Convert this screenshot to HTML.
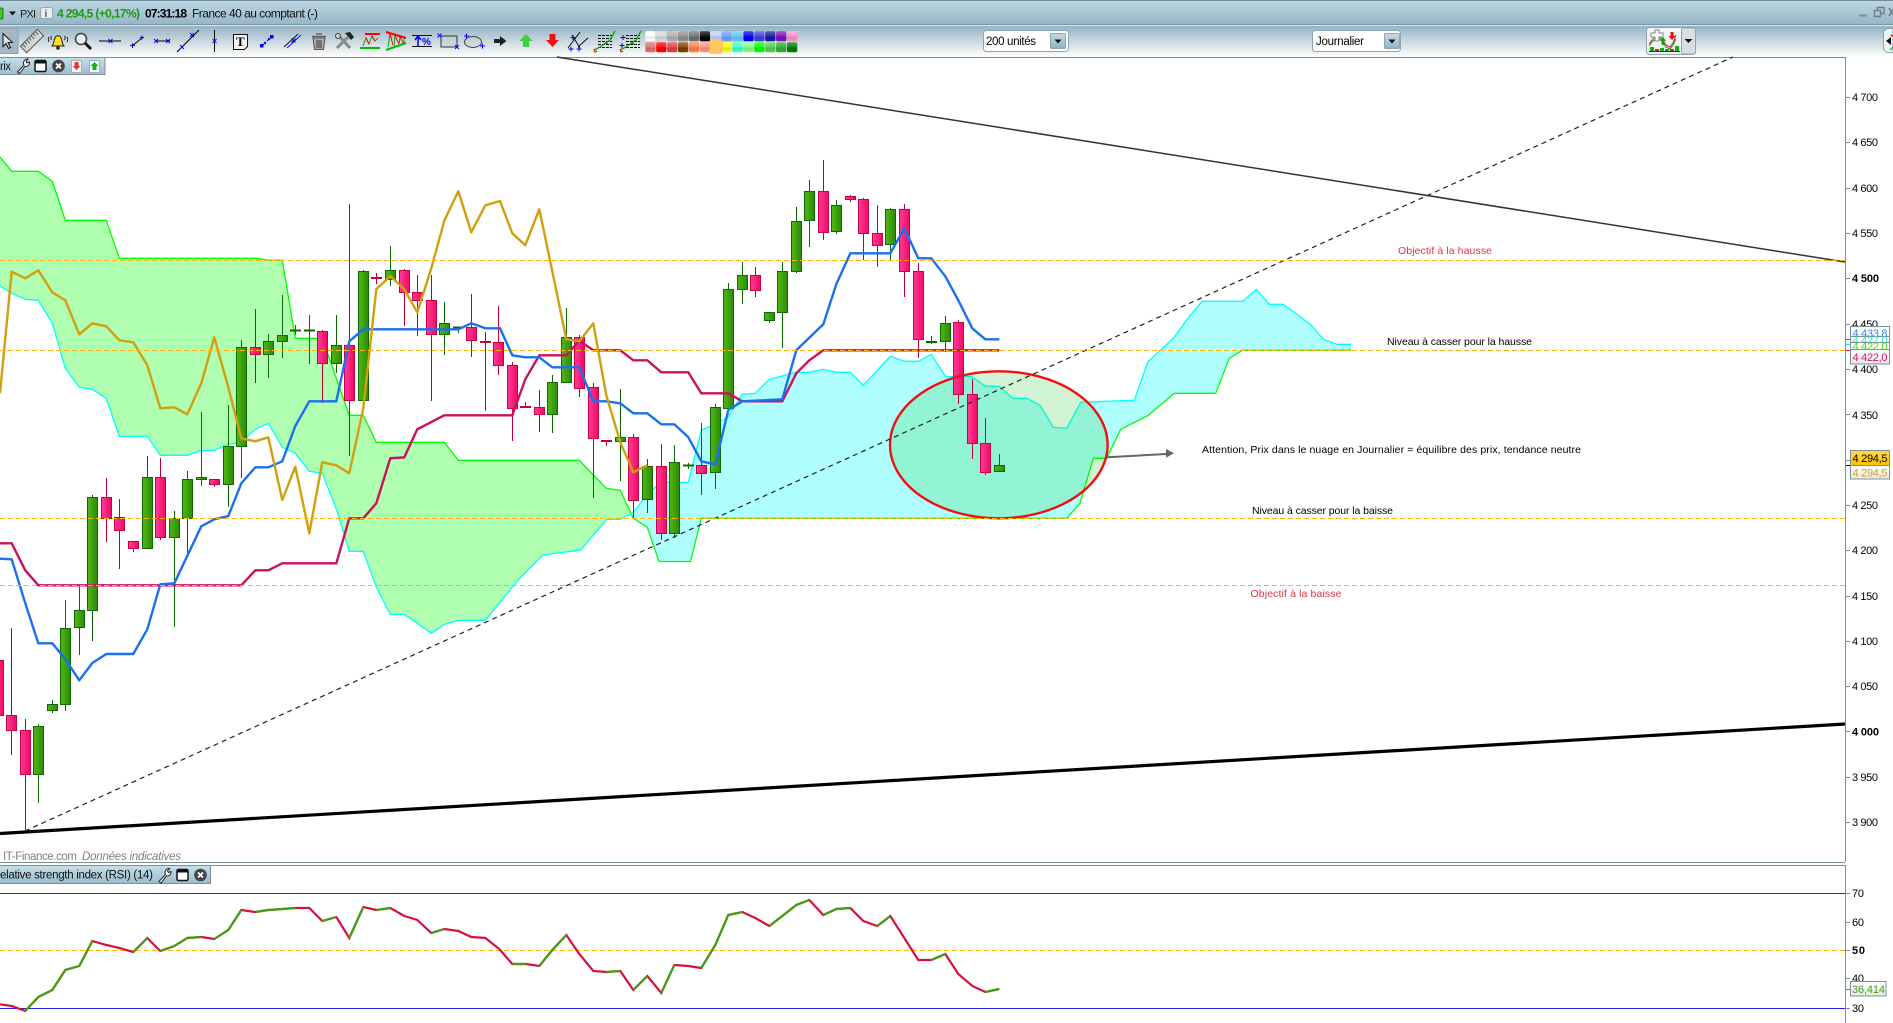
<!DOCTYPE html>
<html lang="fr"><head><meta charset="utf-8"><title>PXI</title>
<style>
html,body{margin:0;padding:0;background:#fff;overflow:hidden}
svg{display:block}
text{font-family:"Liberation Sans",sans-serif;font-size:11px;fill:#000}
.g rect{width:10px;fill:url(#gc);stroke:#0c6a00;stroke-width:1}
.p rect{width:10px;fill:url(#pc);stroke:#c80040;stroke-width:1}
.dg rect{width:10px;fill:#0c6a00;stroke:#0c6a00}
.dp rect{width:10px;fill:#c80040;stroke:#c80040}
.ax{fill:#000}
.b{font-weight:bold}
</style></head><body>
<svg width="1893" height="1023" viewBox="0 0 1893 1023" xmlns="http://www.w3.org/2000/svg">
<defs>
<linearGradient id="gc"><stop offset="0" stop-color="#52b812"/><stop offset="1" stop-color="#2c8a08"/></linearGradient>
<linearGradient id="pc"><stop offset="0" stop-color="#ff3c9c"/><stop offset="1" stop-color="#f00a62"/></linearGradient>
<linearGradient id="tb" x2="0" y2="1"><stop offset="0" stop-color="#bfdae6"/><stop offset="1" stop-color="#97b6c6"/></linearGradient>
<linearGradient id="bb" x2="0" y2="1"><stop offset="0" stop-color="#96b2c2"/><stop offset="1" stop-color="#ffffff"/></linearGradient>
<linearGradient id="tab" x2="0" y2="1"><stop offset="0" stop-color="#c4e0ec"/><stop offset="1" stop-color="#9cbccc"/></linearGradient>
<linearGradient id="gold" x2="0" y2="1"><stop offset="0" stop-color="#ffdc40"/><stop offset="1" stop-color="#ffbe00"/></linearGradient>
<linearGradient id="tag" x2="0" y2="1"><stop offset="0" stop-color="#ffffff"/><stop offset="1" stop-color="#e8e8e8"/></linearGradient>
<linearGradient id="sel" x2="0" y2="1"><stop offset="0" stop-color="#c6dce6"/><stop offset="1" stop-color="#8fb0c2"/></linearGradient>
<linearGradient id="gloss" x2="0" y2="1"><stop offset="0" stop-color="#fff" stop-opacity=".3"/><stop offset=".5" stop-color="#fff" stop-opacity=".08"/><stop offset=".55" stop-color="#000" stop-opacity=".1"/><stop offset="1" stop-color="#000" stop-opacity="0"/></linearGradient>
</defs>

<!-- title bar -->
<rect width="1893" height="24" fill="url(#tb)"/>
<rect width="1893" height="1" fill="#6f8a99"/>
<rect y="24" width="1893" height="1" fill="#7a96a6"/>
<rect y="25" width="1893" height="1" fill="#d8e8f0"/>
<rect x="-4" y="8" width="7" height="11" rx="1.500" fill="#3ec820" stroke="#1c7a10"/>
<path d="M9 11.500h7l-3.500 4z" fill="#111"/>
<text x="20" y="17.500" style="font-size:11px;fill:#222" textLength="16">PXI</text>
<rect x="40.500" y="7.500" width="12" height="11" rx="2" fill="#e6eef2" stroke="#98a8b0"/>
<text x="44.500" y="17" style="font-size:10px;font-weight:bold;fill:#556">i</text>
<text x="57" y="17.500" class="b" style="font-size:12px;fill:#1f9a10" textLength="83">4 294,5 (+0,17%)</text>
<text x="145" y="17.500" class="b" style="font-size:12px" textLength="42">07:31:18</text>
<text x="192" y="17.500" style="font-size:12px;fill:#111" textLength="126">France 40 au comptant (-)</text>
<path d="M1859 15.500h8" stroke="#7a8d98" stroke-width="2"/>
<path d="M1874.500 10.500h6v6h-6zM1877.500 10v-2.500h6.500v6h-3" fill="none" stroke="#6d808c" stroke-width="1.400"/>
<path d="M1889 8l5 8M1894 8l-5 8" stroke="#6d808c" stroke-width="1.600"/>

<!-- tool bar -->
<rect y="26" width="1893" height="31" fill="url(#bb)"/>
<rect x="-2" y="28.500" width="20" height="25" fill="#a4b8c5" stroke="#8ba0ad"/>
<path d="M3 33.500v13l3-3 2.500 5 2-1-2.500-5h4.500z" fill="#dfe6ea" stroke="#111"/>
<!-- ruler -->
<g transform="rotate(-45 32 41)"><rect x="20" y="36.500" width="24" height="9" fill="#d6d6d6" stroke="#555"/><path d="M23 37v4M26 37v3M29 37v4M32 37v3M35 37v4M38 37v3M41 37v4" stroke="#555"/></g>
<!-- bell -->
<path d="M52 46c2-2 1.500-5 3-8 1-3 5-3 6 0 1.500 3 1 6 3 8z" fill="#ffe020" stroke="#222"/><circle cx="58" cy="48" r="1.800" fill="#222"/><path d="M49 37c-1 2-1 3 0 5M51.500 36c-1 1-1 2 0 4M67 37c1 2 1 3 0 5M64.500 36c1 1 1 2 0 4" stroke="#222" fill="none"/>
<!-- magnifier -->
<circle cx="81" cy="39" r="5.500" fill="#e8eef2" stroke="#444" stroke-width="1.600"/><path d="M85 43l6 6" stroke="#111" stroke-width="2.800"/>
<!-- lines -->
<path d="M99 41h22" stroke="#000"/><path d="M108.500 39l4 4M112.500 39l-4 4" stroke="#00f" stroke-width=".9"/>
<path d="M132 46l10-8" stroke="#000"/><path d="M130 45.500h5M132.500 43v5M140 37.500h4M142 35.500v4" stroke="#00f"/>
<path d="M156 41h14" stroke="#000"/><path d="M154 39l4 4M158 39l-4 4M166 39l4 4M170 39l-4 4" stroke="#00f" stroke-width=".9"/>
<path d="M177 52l22-22" stroke="#000"/><path d="M180 45l4 4M184 45l-4 4M190 33l4 4M194 33l-4 4" stroke="#00f" stroke-width=".9"/>
<path d="M214.500 30v22" stroke="#000"/><path d="M212.500 39l4 4M216.500 39l-4 4" stroke="#00f" stroke-width=".9"/>
<!-- T -->
<path d="M233.500 34.500h14v12l-3 3h-11z" fill="#f4f4f4" stroke="#111"/><text x="236" y="46" style="font-size:13px;font-weight:bold;font-family:'Liberation Serif',serif">T</text>
<!-- blue squares -->
<path d="M263 45l3-3M267 41l3-3M264 42l2 2M268 38l2 2" stroke="#00f"/><rect x="260" y="44" width="3.500" height="3.500" fill="#00f"/><rect x="270" y="35" width="3.500" height="3.500" fill="#00f"/>
<path d="M284 47l14-13" stroke="#111"/><path d="M287 48l14-13M291.500 38.500l4 4M295.500 38.500l-4 4" stroke="#00f" stroke-width=".9"/>
<!-- trash -->
<path d="M313 38h12l-1.500 11.500h-9z" fill="#aaa" stroke="#555"/><path d="M312 36.500h14M316 34h6M317 40v8M319 40v8M321 40v8" stroke="#555" stroke-width="1.300"/>
<!-- tools -->
<path d="M337 48l11-11M340 37l10 11" stroke="#888" stroke-width="3"/><path d="M345 33l5-1 4 5-3 3z" fill="#222"/><circle cx="338" cy="36" r="2.500" fill="#ccc" stroke="#444"/>
<!-- channel -->
<rect x="365" y="33" width="15" height="2" fill="#f00"/><rect x="360" y="47" width="20" height="2" fill="#0b0"/>
<path d="M363 46l3-8 3 6 3-8 3 5 3-3" fill="none" stroke="#0a0"/><path d="M366 38l3 6M372 36l3 5" stroke="#f00"/>
<path d="M386 32l20 6" stroke="#f00" stroke-width="2"/><path d="M386 50l20-7" stroke="#0b0" stroke-width="2"/><path d="M390 34l-2 13M395 35l-1 11M400 37l-1 7M404 38v5" stroke="#0a0"/><path d="M390 34l3 11M395 36l4 8M400 37l4 7" stroke="#f00"/>
<path d="M412 35.500h20M412 46.500h20" stroke="#111"/><path d="M418 46v-9M415 40l3-4 3 4" stroke="#00f" fill="none" stroke-width="1.500"/><text x="422" y="45" style="font-size:10px;font-weight:bold;fill:#00f">%</text>
<rect x="441" y="36" width="16" height="11" fill="#c0ccd4" fill-opacity=".4" stroke="#333"/><path d="M437.500 33.500l4 4M441.500 33.500l-4 4M455 45l4 4M459 45l-4 4" stroke="#00f" stroke-width=".9"/>
<ellipse cx="473" cy="42" rx="8.500" ry="5.500" fill="#c0ccd4" fill-opacity=".4" stroke="#444"/><path d="M464 36h5M466.500 33.500v5M480 46h5M482.500 43.500v5" stroke="#00f"/>
<path d="M494 39h6v-3l6.500 5-6.500 5v-3h-6z" fill="#222"/>
<path d="M526 34l6.500 7h-3.500v6h-6v-6h-3.500z" fill="#3ed040"/>
<path d="M549.500 34h6v6h3.500l-6.500 7-6.500-7h3.500z" fill="#f01010"/>
<path d="M572 35l8 13M568 48l12-16M578 47l10-9" stroke="#111"/><path d="M570.500 37.500h5M573 35v5M568.500 49h5M571 46.500v5M576.500 49h5M579 46.500v5" stroke="#00f"/>
<path d="M598 35.500h14M598 38.500h14M598 41.500h14M598 44.500h14M598 47.500h14" stroke="#111" stroke-dasharray="3 1"/><path d="M594 50l6-3 10-7 5-9" fill="none" stroke="#0a0" stroke-width="1.300"/><path d="M594 49l1 3 2-1M605 43l3 1" stroke="#e00" fill="none"/>
<path d="M626 35.500h14M626 38.500h14M626 41.500h14M626 44.500h14M626 47.500h14" stroke="#111" stroke-dasharray="3 1"/><path d="M620 50l6-3 10-7 5-9" fill="none" stroke="#0a0" stroke-width="1.300"/><path d="M620 49l1 3 2-1M631 43l3 1" stroke="#e00" fill="none"/><path d="M620.500 37.500h5M623 35v5M619.500 45.500h5M622 43v5" stroke="#00f"/>

<!-- palette -->
<g>
<rect x="645.300" y="31.200" width="10.200" height="10" rx="1.500" fill="#fff"/>
<rect x="656.200" y="31.200" width="10.200" height="10" rx="1.500" fill="#d8d8d8"/>
<rect x="667.100" y="31.200" width="10.200" height="10" rx="1.500" fill="#b0b0b0"/>
<rect x="678" y="31.200" width="10.200" height="10" rx="1.500" fill="#909090"/>
<rect x="688.900" y="31.200" width="10.200" height="10" rx="1.500" fill="#707070"/>
<rect x="699.800" y="31.200" width="10.200" height="10" rx="1.500" fill="#000"/>
<rect x="710.700" y="31.200" width="10.200" height="10" rx="1.500" fill="#c0d0ff"/>
<rect x="721.600" y="31.200" width="10.200" height="10" rx="1.500" fill="#70a0f8"/>
<rect x="732.500" y="31.200" width="10.200" height="10" rx="1.500" fill="#60c8f8"/>
<rect x="743.400" y="31.200" width="10.200" height="10" rx="1.500" fill="#0000f0"/>
<rect x="754.300" y="31.200" width="10.200" height="10" rx="1.500" fill="#4040e0"/>
<rect x="765.200" y="31.200" width="10.200" height="10" rx="1.500" fill="#1818a0"/>
<rect x="776.100" y="31.200" width="10.200" height="10" rx="1.500" fill="#8010c0"/>
<rect x="787" y="31.200" width="10.200" height="10" rx="1.500" fill="#ff90c8"/>
<rect x="645.300" y="42.200" width="10.200" height="10" rx="1.500" fill="#e07070"/>
<rect x="656.200" y="42.200" width="10.200" height="10" rx="1.500" fill="#ff0000"/>
<rect x="667.100" y="42.200" width="10.200" height="10" rx="1.500" fill="#e84040"/>
<rect x="678" y="42.200" width="10.200" height="10" rx="1.500" fill="#804000"/>
<rect x="688.900" y="42.200" width="10.200" height="10" rx="1.500" fill="#ff8040"/>
<rect x="699.800" y="42.200" width="10.200" height="10" rx="1.500" fill="#ff9080"/>
<rect x="721.600" y="42.200" width="10.200" height="10" rx="1.500" fill="#ffff00"/>
<rect x="732.500" y="42.200" width="10.200" height="10" rx="1.500" fill="#40ffc8"/>
<rect x="743.400" y="42.200" width="10.200" height="10" rx="1.500" fill="#80ff80"/>
<rect x="754.300" y="42.200" width="10.200" height="10" rx="1.500" fill="#00ff00"/>
<rect x="765.200" y="42.200" width="10.200" height="10" rx="1.500" fill="#50d050"/>
<rect x="776.100" y="42.200" width="10.200" height="10" rx="1.500" fill="#30b030"/>
<rect x="787" y="42.200" width="10.200" height="10" rx="1.500" fill="#008000"/>
<rect x="645.300" y="31.200" width="152" height="10" fill="url(#gloss)"/>
<rect x="645.300" y="42.200" width="152" height="10" fill="url(#gloss)"/>
<rect x="709.500" y="40" width="13" height="13.500" rx="2" fill="#ffc860" stroke="#f0b860" stroke-width=".5"/>
</g>

<!-- selects -->
<rect x="983.500" y="30.500" width="85" height="21" rx="3" fill="#fff" stroke="#8fa4b0"/>
<text x="986" y="45" style="font-size:11.500px" textLength="50">200 unités</text>
<rect x="1050.500" y="33.500" width="15" height="15" rx="1" fill="url(#sel)" stroke="#8fa4b0"/><path d="M1054.500 39.500h7l-3.500 4z" fill="#111"/>
<rect x="1312.500" y="30.500" width="88" height="21" rx="3" fill="#fff" stroke="#8fa4b0"/>
<text x="1316" y="45" style="font-size:11.500px" textLength="48">Journalier</text>
<rect x="1384.500" y="33.500" width="15" height="15" rx="1" fill="url(#sel)" stroke="#8fa4b0"/><path d="M1388.500 39.500h7l-3.500 4z" fill="#111"/>

<!-- strategy button -->
<rect x="1646.500" y="27.500" width="49" height="27" rx="3" fill="#f2f4f5" stroke="#8fa4b0"/>
<rect x="1681.500" y="28" width="14" height="26" rx="2" fill="#d8dfe3" stroke="#8fa4b0"/>
<path d="M1684.500 39h8l-4 4z" fill="#111"/>
<path d="M1649 44l4-5 5-3 4 3 4 6 4 2 3-4 3-8" fill="none" stroke="#d02020"/>
<path d="M1649 46l4-5 5-3 4 3 4 6 4 2 3-4 3-6" fill="none" stroke="#10a010"/>
<path d="M1655 30h4v3h4v4h-4v4h-4v-4h-4v-4h4z" fill="#fff" stroke="#7a8a90"/>
<path d="M1660 41l3-4 3 4h-1.500v4h-3v-4z" fill="#10a010"/><path d="M1670.500 32h3v4h2l-3.500 4-3.500-4h2z" fill="#e01010"/>
<rect x="1650" y="47" width="4" height="4" fill="#10b010"/><rect x="1655" y="49" width="4" height="2" fill="#d02040"/><rect x="1660" y="48" width="4" height="3" fill="#10b010"/><rect x="1665" y="49" width="4" height="2" fill="#10b010"/><rect x="1670" y="49" width="4" height="2" fill="#d02040"/><rect x="1675" y="46" width="4" height="5" fill="#10b010"/>
<rect x="1649" y="51" width="31" height="1" fill="#2020c0"/>
<path d="M1893 28.500h-6l-3.500 3v18l3.500 3h6z" fill="#f0f2f3" stroke="#8fa4b0"/>
<path d="M1886 41l5-4v8z" fill="#111"/><path d="M1890 50l3-3" stroke="#0a0"/><path d="M1891 35l2 1" stroke="#e03030" stroke-width="2"/>

<!-- chart frame -->
<rect y="57" width="1893" height="966" fill="#fff"/>
<path d="M0 57.500h1845.500" stroke="#7f8f98"/>

<!-- cloud fills -->
<path fill="#b0ffb0" d="M0 157L11.700 171.300H38.300L52.300 181.300L65.300 220.300H106.300L119.300 258.300H256.700L268.300 260.300H282.300L295.300 338.300H322.300L349.300 415.300H363.300L376.300 442.300H444.300L458.300 460.300H579.300L593.300 475L606.300 488.300L620.300 490.300L631.200 513.800L620.300 519.300H606.700L580.700 550L543 555L519 579L485.300 620.300H458.300L444.300 624.300L431.300 633.300L417.300 623.300L404.300 614.300H390.300L376.300 587.300L363.300 551.300H349.300L336.700 510L322.300 473.300L309.300 471.300L295.300 453.300L282.300 447.300L268.300 423.300L255.300 429.300L241.300 442.300L228.300 444.300L214.300 450.300H201.300L187.300 455.300H160.300L147.300 436.300H119.300L106.300 398.300L92.300 389.300L79.300 387.300L65.300 368.300L52.300 323.300L38.300 300.300L25.300 299.300L11.700 293.300L0 286Z"/>
<path fill="#b0ffff" d="M631.200 513.800L633.300 518.300L647.300 527.300L659 561.500H690.500L701.300 518.300H1066.700L1080 503.300L1093.300 458.300H1106.700L1120.700 429.300L1147.700 415.700L1174.300 393.300H1215.700L1229.300 358.300L1242.300 350.300H1351V344.300H1337L1323.400 339.300L1310 324L1283.300 304.300H1269.300L1256.300 289.300L1242.700 301.300H1202.300L1189 316.700L1174.300 337.300L1147.700 362L1134.300 400.300L1080.700 402.300L1066.700 428.300L1053.300 427.300L1040 405.300L1026.700 398.300H1012.700L999.300 386.300H985.300L971.700 376.500H945.500L931.300 354.300L918.300 361.300H904.300L890.300 356.300L863.300 385.300L850.300 372.300H836.300L823.300 369.300L809.300 372.300H796.300L769.300 379.300L755.300 393.300L742.300 394.300L728.300 416.700L715.300 424.300L701.300 430L688.300 482.300H661.300L647.300 494L633.300 512.700Z"/>
<!-- cloud lines -->
<path fill="none" stroke="#0f0" stroke-width="1.300" d="M0 157L11.700 171.300H38.300L52.300 181.300L65.300 220.300H106.300L119.300 258.300H256.700L268.300 260.300H282.300L295.300 338.300H322.300L349.300 415.300H363.300L376.300 442.300H444.300L458.300 460.300H579.300L593.300 475L606.300 488.300L620.300 490.300L633.300 518.300L647.300 527.300L659 561.500H690.500L701.300 518.300H1066.700L1080 503.300L1093.300 458.300H1106.700L1120.700 429.300L1147.700 415.700L1174.300 393.300H1215.700L1229.300 358.300L1242.300 350.300H1351"/>
<path fill="none" stroke="#0ff" stroke-width="1.300" d="M0 286L11.700 293.300L25.300 299.300L38.300 300.300L52.300 323.300L65.300 368.300L79.300 387.300L92.300 389.300L106.300 398.300L119.300 436.300H147.300L160.300 455.300H187.300L201.300 450.300H214.300L228.300 444.300L241.300 442.300L255.300 429.300L268.300 423.300L282.300 447.300L295.300 453.300L309.300 471.300L322.300 473.300L336.700 510L349.300 551.300H363.300L376.300 587.300L390.300 614.300H404.300L417.300 623.300L431.300 633.300L444.300 624.300L458.300 620.300H485.300L519 579L543 555L580.700 550L606.700 519.300H620.300L633.300 512.700L647.300 494L661.300 482.300H688.300L701.300 430L715.300 424.300L728.300 416.700L742.300 394.300L755.300 393.300L769.300 379.300L796.300 372.300H809.300L823.300 369.300L836.300 372.300H850.300L863.300 385.300L890.300 356.300L904.300 361.300H918.300L931.300 354.300L945.500 376.500H971.700L985.300 386.300H999.300L1012.700 398.300H1026.700L1040 405.300L1053.300 427.300L1066.700 428.300L1080.700 402.300L1134.300 400.300L1147.700 362L1174.300 337.300L1189 316.700L1202.300 301.300H1242.700L1256.300 289.300L1269.300 304.300H1283.300L1310 324L1323.400 339.300L1337 344.300H1351"/>

<!-- ellipse fill under candles -->
<ellipse cx="998.800" cy="444.800" rx="108.800" ry="73.500" fill="rgb(40,205,50)" fill-opacity=".21"/>

<!-- wicks -->
<path fill="none" stroke="#0c6a00" d="M38.500 724V803M52.500 700V713M65.500 600V711M79.500 587V655M92.500 495V641M147.500 456V548M174.500 511V627M187.500 471V553M201.500 412V486M228.500 405V507M241.500 340V478M268.500 334V378M282.500 295V358M295.500 325V335M309.500 315V364M336.500 315V373M363.500 270V400M390.500 246V286M444.500 302V355M458.500 327V333M552.500 375V433M566.500 308V383M620.500 389V481M647.500 459V513M674.500 445V538M688.500 463V469M715.500 404V489M728.500 283V408M742.500 262V304M769.500 312V323M782.500 262V348M796.500 207V273M809.500 180V247M836.500 200V234M890.500 208V260M931.500 336V344M945.500 316V352M999.500 454V472"/>
<path fill="none" stroke="#c00030" d="M11.500 628V755M25.500 719V830M106.500 478V542M119.500 499V569M133.500 541V552M160.500 458V540M214.500 479V487M255.500 309V383M322.500 330V403M349.500 204V456M376.500 273V284M404.500 269V326M417.500 275V336M431.500 275V401M471.500 294V357M485.500 332V411M498.500 306V375M512.500 362V441M525.500 402V407M539.500 390V432M579.500 335V397M593.500 383V498M606.500 441V446M633.500 434V518M661.500 444V540M701.500 423V495M755.500 267V297M823.500 160V240M850.500 195V202M863.500 198V260M877.500 205V267M904.500 204V297M918.500 263V358M958.500 320V404M972.500 379V459M985.500 418V475"/>
<!-- bodies -->
<g class="g">
<rect x="33.500" y="726.500" height="48"/><rect x="47.500" y="704.500" height="6"/><rect x="60.500" y="628.500" height="76"/><rect x="74.500" y="610.500" height="17"/><rect x="87.500" y="497.500" height="113"/><rect x="142.500" y="477.500" height="71"/><rect x="169.500" y="518.500" height="19"/><rect x="182.500" y="479.500" height="39"/><rect x="196.500" y="477.500" height="2"/><rect x="223.500" y="446.500" height="38"/><rect x="236.500" y="347.500" height="99"/><rect x="263.500" y="341.500" height="13"/><rect x="277.500" y="335.500" height="6"/><rect x="331.500" y="345.500" height="18"/><rect x="358.500" y="271.500" height="129"/><rect x="385.500" y="270.500" height="9"/><rect x="439.500" y="323.500" height="11"/><rect x="547.500" y="382.500" height="32"/><rect x="561.500" y="337.500" height="45"/><rect x="615.500" y="437.500" height="4"/><rect x="642.500" y="466.500" height="33"/><rect x="669.500" y="462.500" height="71"/><rect x="710.500" y="407.500" height="65"/><rect x="723.500" y="289.500" height="119"/><rect x="737.500" y="275.500" height="14"/><rect x="764.500" y="312.500" height="8"/><rect x="777.500" y="271.500" height="41"/><rect x="791.500" y="221.500" height="50"/><rect x="804.500" y="191.500" height="29"/><rect x="831.500" y="205.500" height="26"/><rect x="885.500" y="209.500" height="35"/><rect x="940.500" y="323.500" height="18"/><rect x="994.500" y="465.500" height="6"/>
</g>
<g class="p">
<rect x="-6.500" y="660.500" height="55"/><rect x="6.500" y="715.500" height="15"/><rect x="20.500" y="730.500" height="44"/><rect x="101.500" y="497.500" height="21"/><rect x="114.500" y="517.500" height="13"/><rect x="128.500" y="541.500" height="7"/><rect x="155.500" y="477.500" height="60"/><rect x="209.500" y="479.500" height="5"/><rect x="250.500" y="347.500" height="7"/><rect x="317.500" y="331.500" height="32"/><rect x="344.500" y="345.500" height="55"/><rect x="399.500" y="270.500" height="22"/><rect x="412.500" y="292.500" height="8"/><rect x="426.500" y="300.500" height="34"/><rect x="466.500" y="327.500" height="13"/><rect x="493.500" y="342.500" height="23"/><rect x="507.500" y="365.500" height="43"/><rect x="534.500" y="407.500" height="7"/><rect x="574.500" y="337.500" height="51"/><rect x="588.500" y="387.500" height="51"/><rect x="628.500" y="437.500" height="63"/><rect x="656.500" y="466.500" height="67"/><rect x="696.500" y="465.500" height="8"/><rect x="750.500" y="275.500" height="15"/><rect x="818.500" y="191.500" height="41"/><rect x="845.500" y="196.500" height="3"/><rect x="858.500" y="199.500" height="34"/><rect x="872.500" y="233.500" height="12"/><rect x="899.500" y="209.500" height="62"/><rect x="913.500" y="271.500" height="68"/><rect x="953.500" y="322.500" height="72"/><rect x="967.500" y="394.500" height="49"/><rect x="980.500" y="443.500" height="29"/>
</g>
<g class="dg"><rect x="290.500" y="330" height="1"/><rect x="304.500" y="330" height="1"/><rect x="453.500" y="327" height="1"/><rect x="683.500" y="465" height="1"/><rect x="926.500" y="341.500" height="1"/></g>
<g class="dp"><rect x="371.500" y="277.500" height="1"/><rect x="520.500" y="406.500" height="1"/><rect x="601.500" y="440.500" height="1"/><rect x="480.500" y="341.500" height="1"/></g>

<!-- kijun -->
<path fill="none" stroke="#cc1060" stroke-width="2.400" d="M0 543.300H11.700L25.300 570.300L38.300 585.300H241.300L255.300 570.300H268.300L282.300 563.300H336.300L349.300 518.300H363.300L376.300 503.300L390.300 458.300L404.300 457.300L417.300 429.300L444.300 415.300H512.300L525.300 379.300L539.300 355.300H566.300L579.300 340.700L593.300 350.300H620.300L633.300 360.300H647.300L661.300 372.300H688.300L701.300 393.300H728.300L742.300 401.300H782.300L796.300 373.300L809.300 360.300L823.300 350.300H999.300"/>
<!-- tenkan -->
<path fill="none" stroke="#1a70f0" stroke-width="2.400" stroke-linejoin="round" d="M0 558.700L11.700 559.300L25.300 603.300L38.300 643.300H52.300L65.300 659.300L79.300 680.300L92.300 663L106.300 654H133.300L147.300 629.300L160.300 584.300L174.300 583.300L201.300 526.300L214.300 519.300L228.300 516L241.300 483.300L255.300 467.300H268.300L282.300 461.300L295.300 426L309.300 401.300H336.300L349.300 341.300L363.300 329.300H458.300L471.300 323.300L485.300 328.300H500L512.300 355.300L525.300 357.300H539.300L552.300 367.300H579.300L593.300 401.300H606.300L620.300 403.300L633.300 413.300H647.300L661.300 424.300H674.300L688.300 437.300L701.300 461.300L715.300 464.300L728.300 410L742.300 401.300L782.300 399.300L796.300 350.300L823.300 324.300L836.300 284.300L850.300 253.300H890.300L904.300 228.300L918.300 258.300H931.300L945.300 276.300L958.300 300.300L972.300 328.300L985.300 339.300H999.300"/>
<!-- chikou -->
<path fill="none" stroke="#d0a010" stroke-width="2.400" stroke-linejoin="round" d="M0 393.300L11.700 271.700L25.300 278.300L38.300 270.300L52.300 292.300L65.300 300.300L79.300 334.300L92.300 323.300L106.300 326.300L119.300 340.300L133.300 342.300L147.300 365.300L160.300 408.300L174.300 407.300L187.300 414.300L201.300 383.300L214.300 337.300L228.300 387.300L241.300 438.300L255.300 441.300L268.300 437.300L282.300 500L295.300 466.700L309.300 533.300L322.300 462.300L336.300 465.300L349.300 473.300L363.300 408.300L376.300 289.300L390.300 276L404.300 289.300L417.300 312.300L431.300 268.300L444.300 220.700L458.300 191.300L471.300 232.300L485.300 205.300L500 201L512.300 233.300L525.300 245.300L539.300 209.300L552.300 271.300L566.300 339.300L579.300 341.300L593.300 323.300L606.300 395.300L620.300 442.300L633.300 472.300L647.300 465.300"/>

<!-- ellipse stroke -->
<ellipse cx="998.800" cy="444.800" rx="108.800" ry="73.500" fill="none" stroke="#f01010" stroke-width="2.400"/>
<!-- arrow -->
<path d="M1107.300 457.300L1166 454" stroke="#666" stroke-width="2"/><path d="M1166 449l8 4.300-8 4.500z" fill="#666"/>

<!-- trend lines -->
<path d="M0 833.500L1845 724" stroke="#000" stroke-width="3.200"/>
<path d="M25 831L1733 57" stroke="#222" stroke-width="1.200" stroke-dasharray="5 4" fill="none"/>
<path d="M557 57L1845 262" stroke="#333" stroke-width="1.500"/>
<!-- horizontal dashed -->
<path d="M0 260.500H1845M0 350.500H1845M0 518.500H1845M0 585.500H1845" stroke="#ffb414" stroke-dasharray="5 3"/>

<!-- annotations -->
<text x="1398" y="254" style="font-size:10.500px;fill:#e83040" textLength="94">Objectif à la hausse</text>
<text x="1387" y="345" style="font-size:10.500px" textLength="145">Niveau à casser pour la hausse</text>
<text x="1202" y="453" style="font-size:10.500px" textLength="379">Attention, Prix dans le nuage en Journalier = équilibre des prix, tendance neutre</text>
<text x="1252" y="514" style="font-size:10.500px" textLength="141">Niveau à casser pour la baisse</text>
<text x="1250.500" y="597" style="font-size:10.500px;fill:#e83040" textLength="91">Objectif à la baisse</text>

<!-- axis -->
<path d="M1845.500 57V862M1845.500 865V1023" stroke="#7f8f98"/>
<path d="M1845 97.500h5M1845 142.500h5M1845 188.500h5M1845 233.500h5M1845 278.500h5M1845 324.500h5M1845 369.500h5M1845 414.500h5M1845 460.500h5M1845 505.500h5M1845 550.500h5M1845 596.500h5M1845 641.500h5M1845 686.500h5M1845 731.500h5M1845 777.500h5M1845 822.500h5" stroke="#7f8f98"/>
<g>
<text x="1852" y="101" textLength="26">4 700</text>
<text x="1852" y="146" textLength="26">4 650</text>
<text x="1852" y="192" textLength="26">4 600</text>
<text x="1852" y="237" textLength="26">4 550</text>
<text x="1852" y="282" class="b" textLength="27">4 500</text>
<text x="1852" y="328" textLength="26">4 450</text>
<text x="1852" y="373" textLength="26">4 400</text>
<text x="1852" y="419" textLength="26">4 350</text>
<text x="1852" y="464" textLength="26">4 300</text>
<text x="1852" y="509" textLength="26">4 250</text>
<text x="1852" y="554" textLength="26">4 200</text>
<text x="1852" y="600" textLength="26">4 150</text>
<text x="1852" y="645" textLength="26">4 100</text>
<text x="1852" y="690" textLength="26">4 050</text>
<text x="1852" y="735.500" class="b" textLength="27">4 000</text>
<text x="1852" y="781" textLength="26">3 950</text>
<text x="1852" y="826" textLength="26">3 900</text>
</g>
<!-- ticks -->
<path d="M1846 339.500h4" stroke="#1a70f0"/><path d="M1846 344.500h4" stroke="#0ff"/><path d="M1846 350.500h4" stroke="#cc1060"/><path d="M1846 465.500h4" stroke="#000"/>
<!-- tags -->
<rect x="1850.500" y="326.500" width="39" height="11" fill="#fff" stroke="#7f8f98"/><text x="1852.500" y="337" textLength="35" style="fill:#3a80f0">4 433,8</text>
<rect x="1850.500" y="336.500" width="39" height="7" fill="#fff" stroke="#7f8f98"/><text x="1852.500" y="344" textLength="35" style="fill:#20e8e8">4 427,0</text>
<rect x="1850.500" y="342.500" width="39" height="8" fill="#fff" stroke="#7f8f98"/><text x="1852.500" y="350" textLength="35" style="fill:#40e020">4 422,0</text>
<rect x="1850.500" y="349.500" width="39" height="14.500" fill="url(#tag)" stroke="#7f8f98"/><text x="1852.500" y="361" textLength="35" style="fill:#d81070">4 422,0</text>
<rect x="1850.500" y="450.500" width="39" height="15" fill="url(#gold)" stroke="#7f8f98"/><text x="1852.500" y="462" textLength="35">4 294,5</text>
<rect x="1850.500" y="465.500" width="39" height="13.500" fill="url(#tag)" stroke="#7f8f98"/><text x="1852.500" y="476.500" textLength="35" style="fill:#d0a020">4 294,5</text>

<!-- sub tab -->
<rect x="-2" y="57.500" width="107" height="17" fill="url(#tab)" stroke="#7f8f98"/>
<text x="0" y="70" style="font-size:11.500px;fill:#222" textLength="11">rix</text>
<path d="M17.500 72l6.500-7c-1.500-3 .5-6 4-6l-2 2.500 1 1.500 2.500-1c.3 3-2 5-4.500 4.300L19.500 73.500z" fill="#fff" stroke="#222"/>
<rect x="35" y="60.500" width="11" height="11" rx="1.500" fill="#fff" stroke="#111" stroke-width="1.500"/><rect x="35" y="60.500" width="11" height="3" fill="#111"/>
<circle cx="58.500" cy="66" r="6.300" fill="#444"/><path d="M56 63.500l5 5M61 63.500l-5 5" stroke="#fff" stroke-width="1.800"/>
<path d="M71.500 60.500h10v12h-10z" fill="#f4f6f8" stroke="#a0b0c0"/><path d="M74.500 62h4v4h2l-4 4-4-4h2z" fill="#f03030"/>
<path d="M89.500 60.500h10v12h-10z" fill="#f4f6f8" stroke="#a0b0c0"/><path d="M94.500 62l4 4h-2v4h-4v-4h-2z" fill="#18b018"/>

<!-- footer of main -->
<text x="3" y="860" style="font-size:11.500px;fill:#808080" textLength="74">IT-Finance.com</text>
<text x="82" y="860" style="font-size:11.500px;fill:#808080;font-style:italic" textLength="99">Données indicatives</text>
<path d="M0 862.500H1845M0 865.500H1845" stroke="#7f8f98"/>

<!-- RSI tab -->
<rect x="-2" y="865.500" width="212.500" height="18" fill="url(#tab)" stroke="#7f8f98"/>
<text x="0" y="878.500" style="font-size:11.500px;fill:#111" textLength="153">elative strength index (RSI) (14)</text>
<path d="M159 881.500l6.500-7c-1.500-3 .5-6 4-6l-2 2.500 1 1.500 2.500-1c.3 3-2 5-4.500 4.300L161 883z" fill="#fff" stroke="#222"/>
<rect x="177" y="869.500" width="11" height="11" rx="1.500" fill="#fff" stroke="#111" stroke-width="1.500"/><rect x="177" y="869.500" width="11" height="3" fill="#111"/>
<circle cx="200.500" cy="875" r="6.300" fill="#444"/><path d="M198 872.500l5 5M203 872.500l-5 5" stroke="#fff" stroke-width="1.800"/>

<!-- RSI -->
<path d="M0 893.500H1845M0 1008.500H1845" stroke="#2222dd"/>
<path d="M0 950.500H1845" stroke="#ffb414" stroke-dasharray="5 3"/>
<path fill="none" stroke="#d81040" stroke-width="2.200" d="M0 1004.300L11.700 1006L25.300 1011L38.300 997L52.300 990L65.300 970L79.300 966L92.300 941L106.300 945L119.300 948L133.300 952L147.300 938L160.300 951L174.300 946L187.300 938L201.300 937L214.300 939L228.300 930L241.300 910L255.300 912L268.300 910L282.300 909L295.300 908H309.300L322.300 921L336.300 917L349.300 938L363.300 907L376.300 910L390.300 908L404.300 916L417.300 920L431.300 933L444.300 929L458.300 931L471.300 937L485.300 938L499.300 949L512.300 964H526L539.300 966L552.300 950L566.300 935L579.300 954L593.300 971L606.300 972L620.300 971L633.300 990L647.300 976L661.300 993L674.300 965L688.300 966L701.300 968L715.300 945L728.300 915L742.300 912L755.300 918L769.300 926L782.300 916L796.300 905L809.300 900L823.300 915L836.300 909L850.300 908L863.300 921L877.300 926L890.300 916L904.300 938L918.300 960H931.300L945.300 954L958.300 974L972.300 986L985.300 992L999.300 989"/>
<path fill="none" stroke="#40a010" stroke-width="2.200" d="M25.300 1011L38.300 997L52.300 990L65.300 970L79.300 966L92.300 941M133.300 952L147.300 938M160.300 951L174.300 946L187.300 938L201.300 937M214.300 939L228.300 930L241.300 910M255.300 912L268.300 910L282.300 909L295.300 908M322.300 921L336.300 917M349.300 938L363.300 907M376.300 910L390.300 908M431.300 933L444.300 929M512.300 964H526M539.300 966L552.300 950L566.300 935M606.300 972L620.300 971M633.300 990L647.300 976M661.300 993L674.300 965M701.300 968L715.300 945L728.300 915L742.300 912M769.300 926L782.300 916L796.300 905L809.300 900M823.300 915L836.300 909L850.300 908M877.300 926L890.300 916M931.300 960L945.300 954M985.300 992L999.300 989"/>
<!-- RSI axis -->
<path d="M1845 893.500h5M1845 922.500h5M1845 950.500h5M1845 978.500h5M1845 1008.500h5" stroke="#7f8f98"/>
<text x="1852" y="897" textLength="12">70</text>
<text x="1852" y="926" textLength="12">60</text>
<text x="1852" y="954" class="b" textLength="13">50</text>
<text x="1852" y="982" textLength="12">40</text>
<text x="1852" y="1012" textLength="12">30</text>
<path d="M1846 989.500h4" stroke="#40a010"/>
<rect x="1850.500" y="981.500" width="35.500" height="14.500" fill="url(#tag)" stroke="#7f8f98"/>
<text x="1852" y="993" textLength="33" style="fill:#40a010">36,414</text>
</svg>
</body></html>
